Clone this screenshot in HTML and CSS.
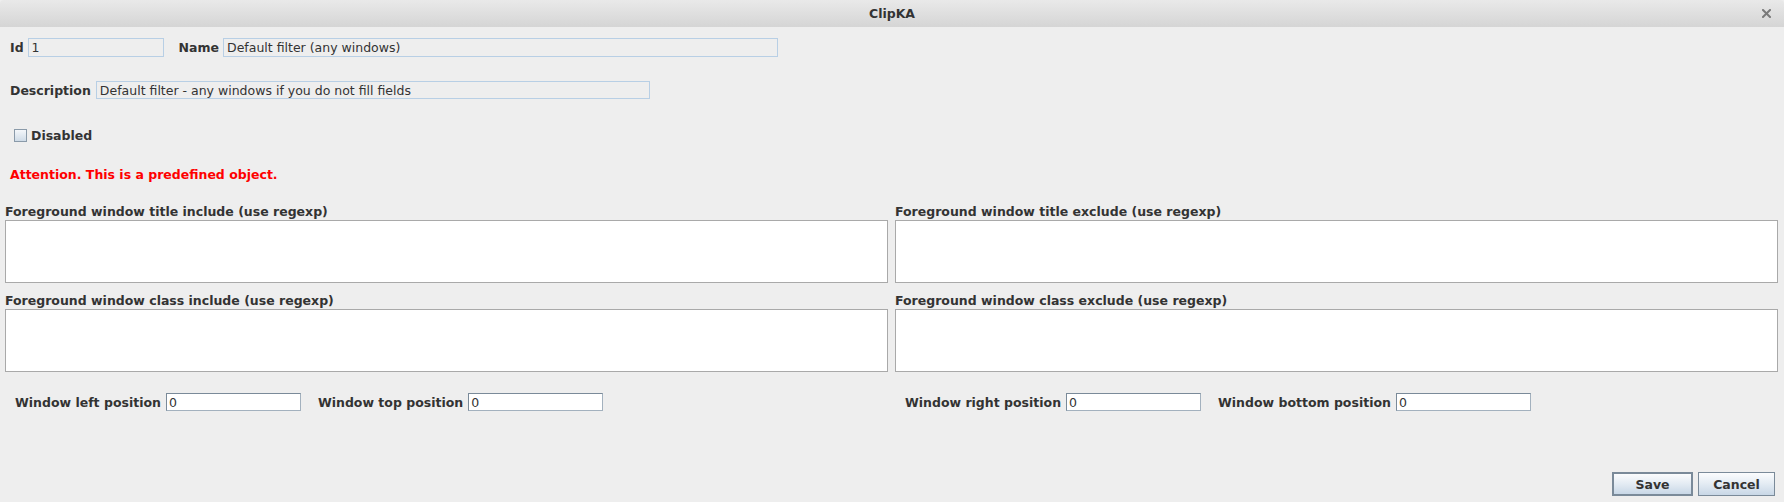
FILE: index.html
```html
<!DOCTYPE html>
<html>
<head>
<meta charset="utf-8">
<title>ClipKA</title>
<link rel="stylesheet" href="styles.css">
</head>
<body>
<div class="window">
  <div class="titlebar">
    <span class="tb-side"></span>
    <span class="tb-title">ClipKA</span>
    <span class="tb-side tb-right">
      <svg class="close" width="9" height="9" viewBox="0 0 9 9"><path d="M1 1 L8 8 M8 1 L1 8" stroke="#7a7a7a" stroke-width="2" stroke-linecap="square"/></svg>
    </span>
  </div>
  <div class="content">
    <div class="row row-id">
      <span class="lbl">Id</span>
      <span class="field ro f-id">1</span>
      <span class="lbl lbl-name">Name</span>
      <span class="field ro f-name">Default filter (any windows)</span>
    </div>
    <div class="row row-desc">
      <span class="lbl">Description</span>
      <span class="field ro f-desc">Default filter - any windows if you do not fill fields</span>
    </div>
    <div class="row row-check">
      <span class="check"></span>
      <span class="lbl">Disabled</span>
    </div>
    <div class="row row-warn">
      <span class="warn">Attention. This is a predefined object.</span>
    </div>
    <div class="areas">
      <div class="cell">
        <div class="area-lbl">Foreground window title include (use regexp)</div>
        <div class="area"></div>
      </div>
      <div class="cell">
        <div class="area-lbl">Foreground window title exclude (use regexp)</div>
        <div class="area"></div>
      </div>
      <div class="cell cell2">
        <div class="area-lbl">Foreground window class include (use regexp)</div>
        <div class="area"></div>
      </div>
      <div class="cell cell2">
        <div class="area-lbl">Foreground window class exclude (use regexp)</div>
        <div class="area"></div>
      </div>
      <div class="pos">
        <span class="lbl">Window left position</span>
        <span class="field ed">0</span>
        <span class="lbl pos-second">Window top position</span>
        <span class="field ed">0</span>
      </div>
      <div class="pos">
        <span class="lbl">Window right position</span>
        <span class="field ed">0</span>
        <span class="lbl pos-second">Window bottom position</span>
        <span class="field ed">0</span>
      </div>
    </div>
    <div class="buttons">
      <span class="btn btn-default">Save</span>
      <span class="btn">Cancel</span>
    </div>
  </div>
</div>
</body>
</html>
```
FILE: styles.css
```css
* { box-sizing: border-box; }
html, body { margin: 0; padding: 0; }
body {
  width: 1784px;
  height: 502px;
  background: #eeeeee;
  font-family: "DejaVu Sans", "Liberation Sans", sans-serif;
  font-size: 12.5px;
  color: #333333;
  overflow: hidden;
}
.window {
  width: 1784px;
  height: 502px;
  display: flex;
  flex-direction: column;
  border-radius: 4px 4px 0 0;
  overflow: hidden;
  background: #eeeeee;
}
.titlebar {
  height: 27px;
  flex: none;
  display: grid;
  grid-template-columns: 1fr auto 1fr;
  align-items: center;
  background: linear-gradient(#e9e9e9, #d5d5d5);
}
.tb-title { font-weight: bold; color: #333; }
.tb-right { display: flex; justify-content: flex-end; padding-right: 13px; }
.close { display: block; }
.content {
  flex: 1;
  display: flex;
  flex-direction: column;
}
.row { display: flex; align-items: center; padding-left: 10px; }
.lbl { font-weight: bold; white-space: nowrap; }
.field {
  display: flex;
  align-items: center;
  padding-left: 3px;
  white-space: nowrap;
  overflow: hidden;
}
.ro { background: #eeeeee; border: 1px solid #b8cfe5; }
.ed {
  background: #ffffff;
  border: 1px solid #a3b1be;
  border-top-color: #7a8a99;
  border-left-color: #7a8a99;
  width: 135px;
  height: 18px;
  margin-left: 5px;
  padding-left: 2px;
}
.row-id { margin-top: 11px; height: 19px; }
.f-id { width: 136px; height: 19px; margin-left: 4px; }
.lbl-name { margin-left: 15px; }
.f-name { width: 555px; height: 19px; margin-left: 4px; }
.row-desc { margin-top: 24px; height: 18px; }
.f-desc { width: 554px; height: 18px; margin-left: 5px; }
.row-check { margin-top: 29px; height: 14px; padding-left: 14px; }
.check {
  width: 13px;
  height: 13px;
  border: 1px solid #8a9aa9;
  background: linear-gradient(#f4f7fa, #cfdbe7);
  margin-right: 4px;
}
.row-warn { margin-top: 24px; height: 16px; }
.warn { color: #ff0000; font-weight: bold; }
.areas {
  margin-top: 22px;
  display: grid;
  grid-template-columns: 1fr 1fr;
  column-gap: 7px;
  padding: 0 6px 0 5px;
}
.area-lbl { font-weight: bold; height: 16px; line-height: 16px; }
.area {
  height: 63px;
  background: #ffffff;
  border: 1px solid #a9a9a9;
}
.cell2 { margin-top: 10px; }
.pos {
  display: flex;
  align-items: center;
  margin-top: 21px;
  padding-left: 10px;
  height: 18px;
}
.pos-second { margin-left: 17px; }
.buttons {
  margin-top: auto;
  display: flex;
  justify-content: flex-end;
  gap: 5px;
  padding: 0 9px 6px 0;
}
.btn {
  height: 24px;
  display: flex;
  align-items: center;
  justify-content: center;
  font-weight: bold;
  border: 1px solid #7a8a99;
  background: linear-gradient(#fbfcfd, #e3ebf3 50%, #c8d7e6);
  width: 77px;
}
.btn-default { border: 2px solid #7a8a99; width: 81px; }
```
